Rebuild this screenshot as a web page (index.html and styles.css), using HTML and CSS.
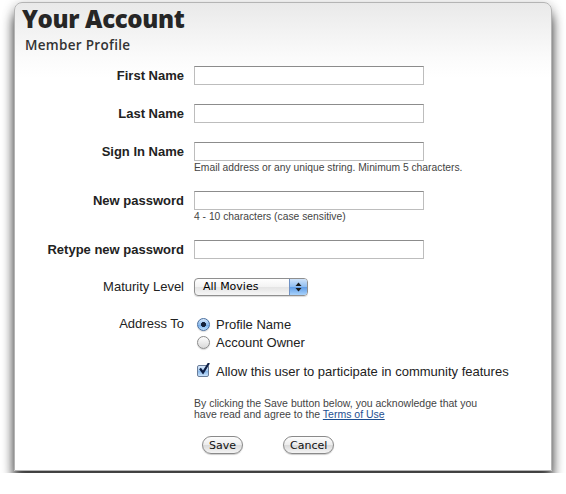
FILE: index.html
```html
<!DOCTYPE html>
<html lang="en">

<head>
    <meta charset="UTF-8">
    <meta name="viewport" content="width=device-width, initial-scale=1.0">
    <title>Your Account</title>
    <link rel="stylesheet" href="styles.css">
</head>

<body>
    <div class="window">
        <div class="head">
            <h1 class="title">Your Account</h1>
            <h2 class="subtitle">Member Profile</h2>
        </div>

        <form class="profile">
            <div class="row">
                <label class="label strong" for="firstname">First Name</label>
                <div class="field"><input type="text" id="firstname" class="text-input" /></div>
            </div>
            <div class="row">
                <label class="label strong" for="lastname">Last Name</label>
                <div class="field"><input type="text" id="lastname" class="text-input" /></div>
            </div>
            <div class="row">
                <label class="label strong" for="signin">Sign In Name</label>
                <div class="field">
                    <input type="text" id="signin" class="text-input" />
                    <p class="hint">Email address or any unique string. Minimum 5 characters.</p>
                </div>
            </div>
            <div class="row">
                <label class="label strong" for="newpass">New password</label>
                <div class="field">
                    <input type="password" id="newpass" class="text-input" />
                    <p class="hint">4 - 10 characters (case sensitive)</p>
                </div>
            </div>
            <div class="row">
                <label class="label strong" for="retype">Retype new password</label>
                <div class="field"><input type="password" id="retype" class="text-input" /></div>
            </div>
            <div class="row">
                <span class="label short">Maturity Level</span>
                <div class="field">
                    <div class="popup">
                        <span class="popup-text">All Movies</span>
                        <span class="popup-arrows">
                            <svg width="7" height="10" viewBox="0 0 7 10">
                                <path d="M3.5 0.5 L6.5 4 L0.5 4 Z" fill="#1a1a1a" />
                                <path d="M3.5 9.5 L6.5 6 L0.5 6 Z" fill="#1a1a1a" />
                            </svg>
                        </span>
                    </div>
                </div>
            </div>
            <div class="row row-tight">
                <span class="label short">Address To</span>
                <div class="field">
                    <div class="choice"><span class="radio checked"></span>Profile Name</div>
                    <div class="choice"><span class="radio"></span>Account Owner</div>
                </div>
            </div>
            <div class="row">
                <span class="label short"></span>
                <div class="field">
                    <div class="choice">
                        <span class="checkbox">
                            <svg width="12" height="12" viewBox="0 0 12 12">
                                <path d="M2 5.5 L5 9.5 L11 0" fill="none" stroke="#0e1f45" stroke-width="2.2" />
                            </svg>
                        </span>Allow this user to participate in community features
                    </div>
                    <p class="terms">By clicking the Save button below, you acknowledge that you<br>have read and agree to the <a href="#">Terms of Use</a></p>
                    <div class="buttons">
                        <button type="button" class="btn">Save</button>
                        <button type="button" class="btn">Cancel</button>
                    </div>
                </div>
            </div>
        </form>
    </div>
</body>

</html>
```

FILE: styles.css
```css
* {
    margin: 0;
    padding: 0;
    box-sizing: border-box;
}

body {
    background: #fff;
    padding: 2px 14px;
    font-family: "Liberation Sans", Arial, sans-serif;
    color: #222;
}

.window {
    width: 538px;
    height: 469px;
    border: 1px solid #b4b4b4;
    border-radius: 8px 8px 0 0;
    background:
        linear-gradient(175deg, transparent 0 30%, rgba(255, 255, 255, 0.55) 31%, transparent 60%),
        linear-gradient(#e9e9e9, #f3f3f3 30px, #fbfbfb 55px, #fff 75px);
    box-shadow: 0 12px 12px rgba(0, 0, 0, 0.72), 0 2px 12px rgba(0, 0, 0, 0.25);
}

.head {
    padding: 1px 7px 13px;
}

.title {
    font-family: "Open Sans", Lato, sans-serif;
    font-weight: 800;
    font-size: 24px;
    line-height: 30px;
    letter-spacing: -0.35px;
    color: #262626;
}

.subtitle {
    margin: 3px 0 0 3px;
    font-family: "Open Sans", sans-serif;
    font-weight: 600;
    font-size: 13.5px;
    line-height: 16px;
    letter-spacing: 0.3px;
    color: #333;
}

.row {
    display: flex;
    align-items: flex-start;
    margin-bottom: 19px;
}

.row-tight {
    margin-bottom: 11px;
}

.label {
    width: 169px;
    flex-shrink: 0;
    text-align: right;
    font-size: 13px;
    line-height: 19px;
    color: #222;
}

.strong {
    font-weight: bold;
}

.short {
    line-height: 18px;
}

.field {
    margin-left: 10px;
}

.text-input {
    display: block;
    width: 230px;
    height: 19px;
    border: 1px solid #bdbdbd;
    border-top-color: #8c8c8c;
    background: #fff;
    outline: none;
}

.hint {
    font-size: 10.3px;
    line-height: 11px;
    padding-top: 1px;
    height: 11px;
    color: #444;
}

.popup {
    display: flex;
    width: 114px;
    height: 18px;
    border: 1px solid #8f8f8f;
    border-radius: 4px;
    overflow: hidden;
    background: linear-gradient(#fff, #f3f3f3 50%, #e4e4e4 51%, #f6f6f6);
    box-shadow: 0 1px 1px rgba(0, 0, 0, 0.15);
}

.popup-text {
    flex: 1;
    padding-left: 8px;
    font-family: "DejaVu Sans", sans-serif;
    font-size: 11px;
    line-height: 16px;
    color: #000;
}

.popup-arrows {
    width: 18px;
    display: flex;
    align-items: center;
    justify-content: center;
    border-left: 1px solid #7092c4;
    background: linear-gradient(#cfe3fa, #8dbcf0 50%, #5f9ce6 51%, #a8d2fb);
}

.choice {
    display: flex;
    align-items: center;
    height: 18px;
    font-size: 13px;
    color: #222;
}

.radio {
    width: 13px;
    height: 13px;
    margin: 0 6px 0 3px;
    border-radius: 50%;
    border: 1px solid #8a8a8a;
    background: linear-gradient(#fefefe, #e9e9e9 55%, #d8d8d8);
    box-shadow: 0 1px 1px rgba(0, 0, 0, 0.15);
}

.radio.checked {
    border-color: #4a6f9f;
    background: radial-gradient(circle, #15223a 0 2.2px, transparent 2.8px), linear-gradient(#d7e8fb, #8fbdee 50%, #6da8e8 51%, #bfe0fc);
}

.checkbox {
    position: relative;
    width: 12px;
    height: 12px;
    margin: 0 7px 0 3px;
    border: 1px solid #6a7d99;
    border-radius: 2px;
    background: linear-gradient(#dbeafb, #a4c9f1 50%, #86b6ea 51%, #cae4fc);
}

.checkbox svg {
    position: absolute;
    left: 0;
    top: -3px;
}

.terms {
    margin-top: 18px;
    font-size: 10.5px;
    line-height: 11px;
    color: #444;
}

.terms a {
    color: #1d4f91;
}

.buttons {
    display: flex;
    gap: 40px;
    margin: 16px 0 0 8px;
}

.btn {
    height: 18px;
    padding: 0 6px;
    border: 1px solid #8a8a8a;
    border-radius: 9px;
    background: linear-gradient(#fdfdfd, #ececec 50%, #dadada 51%, #f4f4f4);
    font-family: "DejaVu Sans", sans-serif;
    font-size: 11px;
    color: #111;
    box-shadow: 0 1px 1px rgba(0, 0, 0, 0.2);
}
```
